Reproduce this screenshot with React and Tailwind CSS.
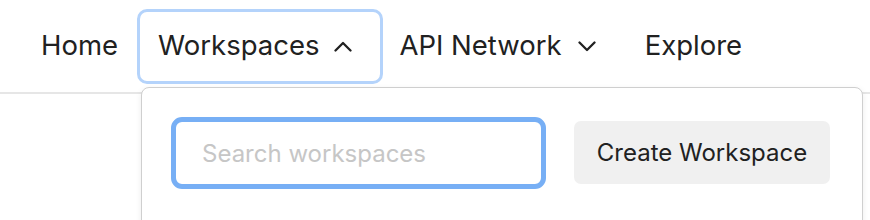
function Chevron({ up, className }) {
  return (
    <svg viewBox="0 0 18 11" width="18" height="11" className={className} fill="none" stroke="currentColor" strokeWidth="2.3" strokeLinecap="round" strokeLinejoin="round">
      {up ? <polyline points="1.5,9.5 9,2 16.5,9.5" /> : <polyline points="1.5,1.5 9,9 16.5,1.5" />}
    </svg>
  );
}

export default function App() {
  return (
    <div className="relative w-[870px] h-[220px] bg-white overflow-hidden text-[#212121] font-['Inter',sans-serif]">
      {/* Top nav */}
      <nav className="flex items-center h-[94px] pl-[41px] border-b-2 border-[#e6e6e6] text-[27.5px] leading-none">
        <span>Home</span>
        <button className="ml-[19px] flex items-center h-[75px] pl-[18px] pr-[28px] border-[3px] border-[#b4d3fb] rounded-[10px]">
          <span>Workspaces</span>
          <Chevron up className="ml-[15px]" />
        </button>
        <button className="ml-[16px] flex items-center">
          <span>API Network</span>
          <Chevron className="ml-[16px]" />
        </button>
        <span className="ml-[49px]">Explore</span>
      </nav>

      {/* Workspaces dropdown */}
      <div className="absolute left-[141px] top-[87px] w-[722px] h-[160px] bg-white border border-[#cfcfcf] rounded-[8px] shadow-[0_2px_6px_rgba(0,0,0,0.08)] pt-[29px] pl-[29px] pr-[32px]">
        <div className="flex items-start gap-[28px]">
          <input
            placeholder="Search workspaces"
            className="w-[375px] h-[72px] border-[5px] border-[#77aff5] rounded-[11px] pl-[26px] text-[24px] outline-none placeholder:text-[#c6c6c6]"
          />
          <button className="mt-[4px] w-[257px] h-[63px] bg-[#f0f0f0] rounded-[7px] text-[24px] text-[#212121]">
            Create Workspace
          </button>
        </div>
      </div>
    </div>
  );
}
